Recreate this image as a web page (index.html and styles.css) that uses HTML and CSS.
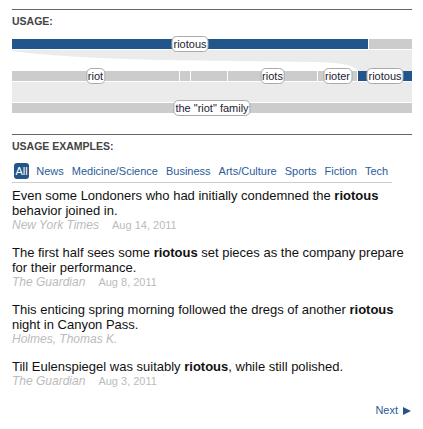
FILE: index.html
```html
<!DOCTYPE html>
<html lang="en">
<head>
  <meta charset="UTF-8" />
  <title>riotous - usage</title>
  <link rel="stylesheet" href="styles.css">
</head>
<body>
  <div class="wrap">

    <section class="section">
      <h2 class="section-title">USAGE:</h2>

      <div class="usage-chart">
        <div class="bar-row">
          <div class="seg seg-blue" style="width:356px"><span class="pill">riotous</span></div>
          <div class="seg seg-gray" style="width:43px"></div>
        </div>

        <svg class="flow" width="400" height="21" viewBox="0 0 400 21">
          <path d="M0,0 H400 V21 H346 C342,15 330,12.5 300,12 L150,10 C80,8.5 30,5 0,1 Z" fill="#ebebeb"/>
        </svg>

        <div class="bar-row">
          <div class="seg seg-gray" style="width:167px"><span class="pill">riot</span></div>
          <div class="seg seg-gray" style="width:10px"></div>
          <div class="seg seg-gray" style="width:36px"></div>
          <div class="seg seg-gray" style="width:89px"><span class="pill">riots</span></div>
          <div class="seg seg-gray" style="width:39px"><span class="pill">rioter</span></div>
          <div class="seg seg-blue" style="width:54px"><span class="pill">riotous</span></div>
        </div>

        <div class="band"></div>

        <div class="bar-row">
          <div class="seg seg-gray" style="width:400px"><span class="pill">the "riot" family</span></div>
        </div>
      </div>
    </section>

    <section class="section section-examples">
      <h2 class="section-title">USAGE EXAMPLES:</h2>

      <nav class="filters">
        <a href="#" class="active">All</a>
        <a href="#">News</a>
        <a href="#">Medicine/Science</a>
        <a href="#">Business</a>
        <a href="#">Arts/Culture</a>
        <a href="#">Sports</a>
        <a href="#">Fiction</a>
        <a href="#">Tech</a>
      </nav>

      <ul class="examples">
        <li>
          <p>Even some Londoners who had initially condemned the <b>riotous</b> behavior joined in.</p>
          <div class="source"><i>New York Times</i><span class="date">Aug 14, 2011</span></div>
        </li>
        <li>
          <p>The first half sees some <b>riotous</b> set pieces as the company prepare for their performance.</p>
          <div class="source"><i>The Guardian</i><span class="date">Aug 8, 2011</span></div>
        </li>
        <li>
          <p>This enticing spring morning followed the dregs of another <b>riotous</b> night in Canyon Pass.</p>
          <div class="source"><i>Holmes, Thomas K.</i></div>
        </li>
        <li>
          <p>Till Eulenspiegel was suitably <b>riotous</b>, while still polished.</p>
          <div class="source"><i>The Guardian</i><span class="date">Aug 3, 2011</span></div>
        </li>
      </ul>

      <div class="pager">
        <a href="#">Next<span class="arrow"></span></a>
      </div>
    </section>

  </div>
</body>
</html>
```

FILE: styles.css
```css
body {
  margin: 0;
  font-family: "Liberation Sans", Arial, sans-serif;
  color: #111;
  background: #fff;
}

.wrap {
  width: 400px;
  padding: 9px 11px 0 12px;
}

.section {
  border-top: 1px solid #666;
}

.section-examples {
  margin-top: 21px;
}

.section-title {
  margin: 5px 0 0;
  font-size: 10.5px;
  line-height: 13px;
  font-weight: bold;
  color: #444;
}

/* usage chart */
.usage-chart {
  margin-top: 11px;
  width: 400px;
}

.bar-row {
  display: flex;
  gap: 1px;
  height: 10px;
}

.seg {
  position: relative;
  flex-shrink: 0;
  height: 10px;
}

.seg-blue {
  background: #22558a;
}

.seg-gray {
  background: #cccccc;
}

.flow {
  display: block;
  margin-top: 1px;
}

.band {
  height: 20px;
  margin: 1px 0;
  background: #ebebeb;
}

.pill {
  position: absolute;
  left: 50%;
  top: 50%;
  transform: translate(-50%, -50%);
  background: #fff;
  border: 1px solid #aaa;
  border-radius: 5px;
  padding: 0 1px;
  font-size: 11px;
  line-height: 14px;
  color: #223;
  white-space: nowrap;
}

/* filters */
.filters {
  display: inline-flex;
  gap: 8px;
  margin-top: 10px;
  padding: 0 4px 3px 2px;
  border-bottom: 1px solid #ccc;
}

.filters a {
  font-size: 11px;
  line-height: 16px;
  color: #2b5c9a;
  text-decoration: none;
}

.filters a.active {
  background: #24558a;
  color: #fff;
  border-radius: 3px;
  padding: 0 1.5px;
  margin-right: -1px;
}

/* examples */
.examples {
  list-style: none;
  margin: 5px 0 0;
  padding: 0;
}

.examples li {
  margin-bottom: 12px;
}

.examples p {
  margin: 0;
  font-size: 13px;
  line-height: 15px;
}

.source {
  font-size: 12px;
  line-height: 15px;
  color: #bbb;
}

.date {
  margin-left: 13px;
  font-size: 11px;
}

.pager {
  padding-top: 3px;
  text-align: right;
  font-size: 11px;
  line-height: 13px;
}

.pager a {
  color: #2b5c9a;
  text-decoration: none;
}

.arrow {
  display: inline-block;
  margin-left: 5px;
  margin-right: 1px;
  width: 0;
  height: 0;
  border-left: 8px solid #24558a;
  border-top: 4.5px solid transparent;
  border-bottom: 4.5px solid transparent;
  vertical-align: -1px;
}
```
